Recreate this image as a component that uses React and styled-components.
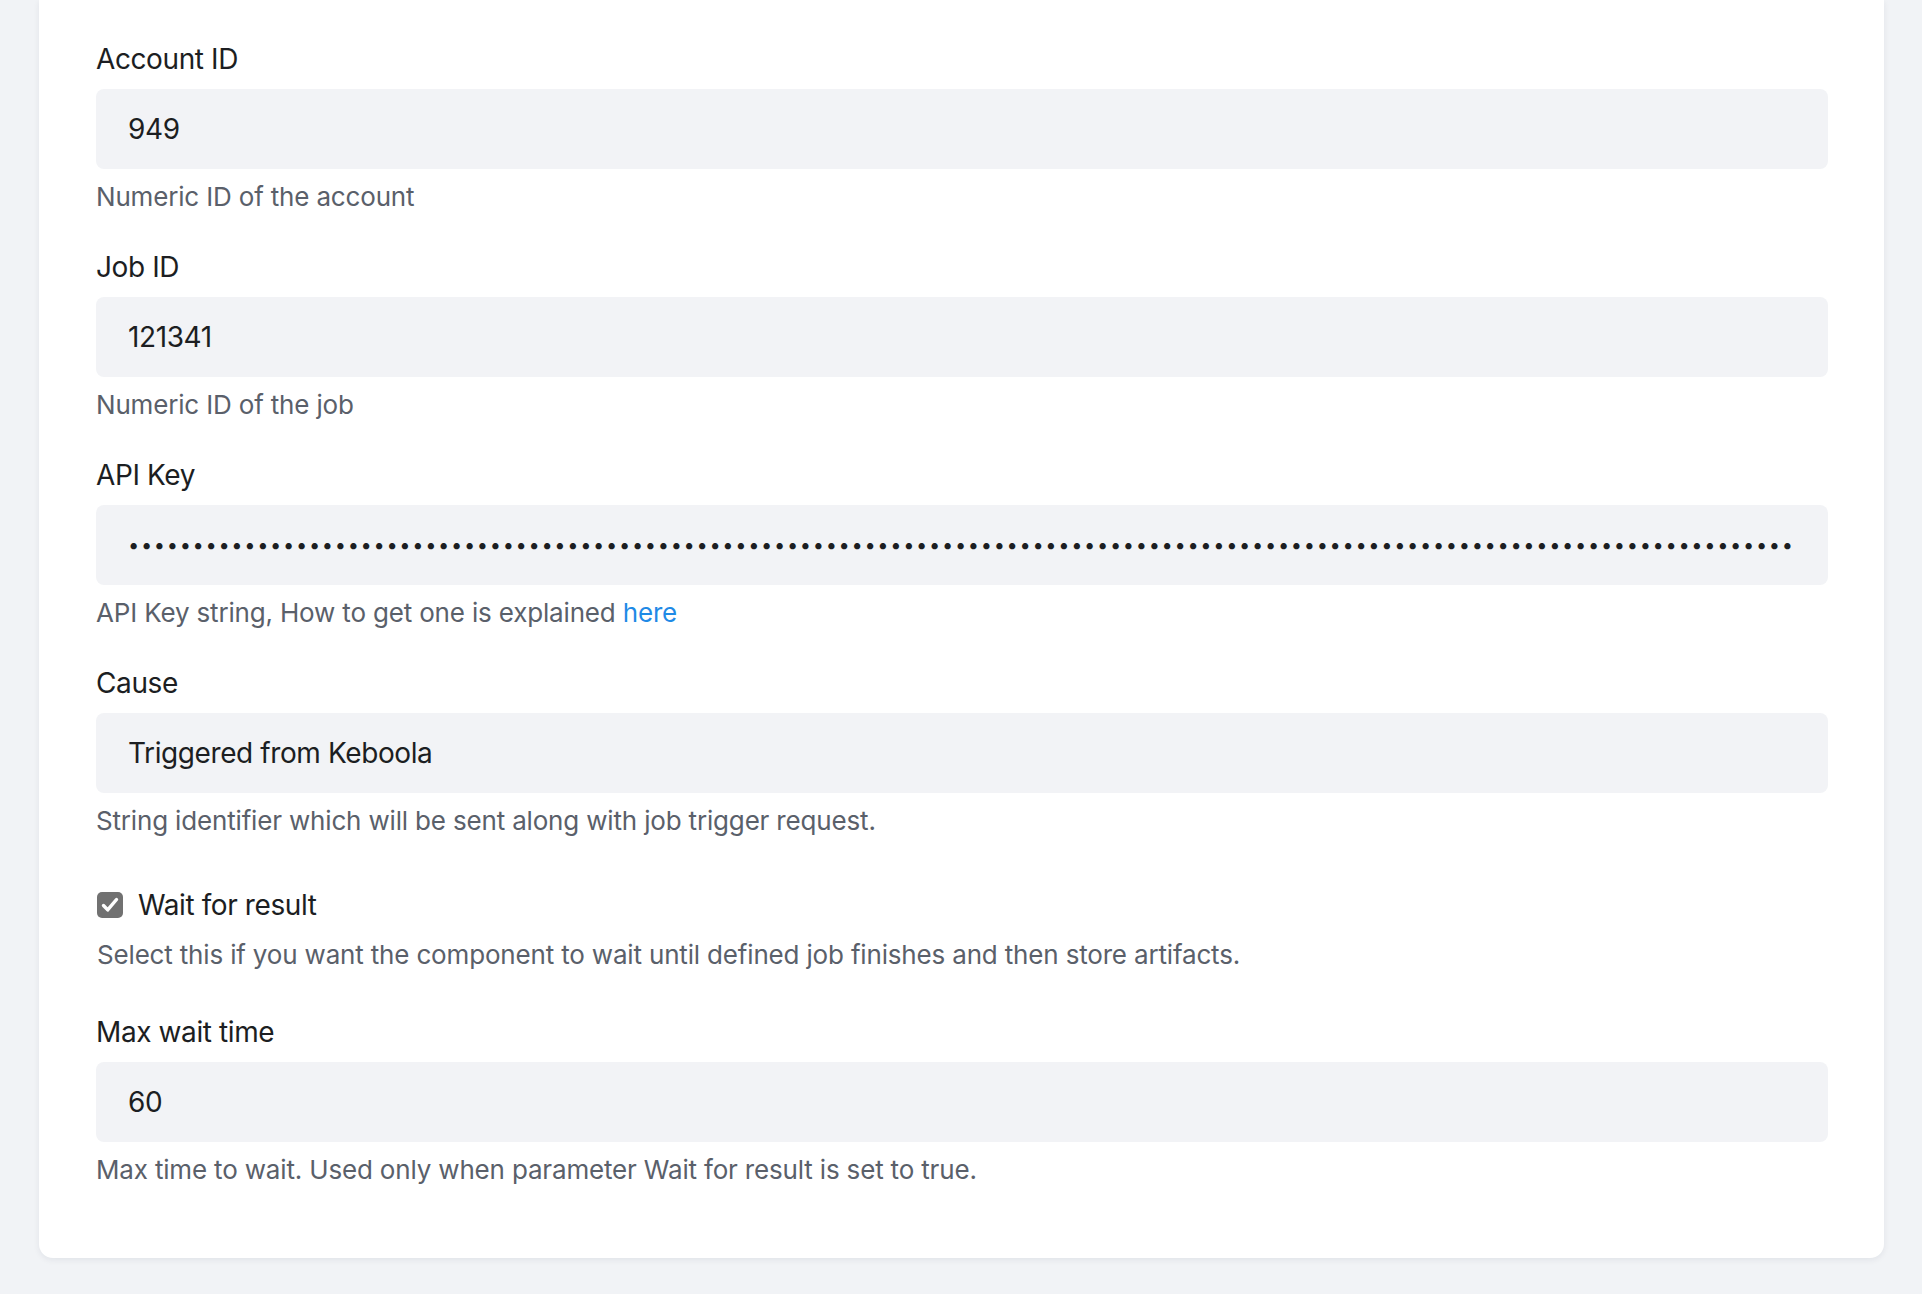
import styled, { createGlobalStyle } from "styled-components";

const GlobalStyle = createGlobalStyle`
  html, body {
    margin: 0;
    padding: 0;
    background: #f1f3f6;
  }
  body {
    font-family: Inter, "Noto Sans", "Liberation Sans", sans-serif;
    -webkit-font-smoothing: antialiased;
  }
`;

const API_KEY = "x".repeat(129);

export default function App() {
  return (
    <>
      <GlobalStyle />
      <Page>
        <Card>
          <Field>
            <Label htmlFor="account-id">Account ID</Label>
            <Input id="account-id" type="text" defaultValue="949" />
            <Help>Numeric ID of the account</Help>
          </Field>

          <Field>
            <Label htmlFor="job-id">Job ID</Label>
            <Input id="job-id" type="text" defaultValue="121341" />
            <Help>Numeric ID of the job</Help>
          </Field>

          <Field>
            <Label htmlFor="api-key">API Key</Label>
            <Input id="api-key" type="password" defaultValue={API_KEY} secret />
            <Help>
              API Key string, How to get one is explained <Link href="#">here</Link>
            </Help>
          </Field>

          <Field>
            <Label htmlFor="cause">Cause</Label>
            <Input id="cause" type="text" defaultValue="Triggered from Keboola" />
            <Help>String identifier which will be sent along with job trigger request.</Help>
          </Field>

          <CheckField>
            <CheckRow>
              <CheckBox>
                <svg width="22" height="22" viewBox="0 0 22 22" fill="none">
                  <path
                    d="M4.5 11.5l4.2 4.4L17.5 5.5"
                    stroke="#fff"
                    strokeWidth="3.4"
                    strokeLinecap="round"
                    strokeLinejoin="round"
                  />
                </svg>
              </CheckBox>
              Wait for result
            </CheckRow>
            <Help tight>
              Select this if you want the component to wait until defined job finishes and then
              store artifacts.
            </Help>
          </CheckField>

          <Field last>
            <Label htmlFor="max-wait">Max wait time</Label>
            <Input id="max-wait" type="text" defaultValue="60" />
            <Help>Max time to wait. Used only when parameter Wait for result is set to true.</Help>
          </Field>
        </Card>
      </Page>
    </>
  );
}

const Page = styled.div`
  padding: 0 38px 36px 39px;
`;

const Card = styled.div`
  background: #ffffff;
  border-radius: 0 0 14px 14px;
  box-shadow: 0 2px 6px rgba(20, 30, 50, 0.07);
  padding: 39px 56px 68px 57px;
`;

const Field = styled.div`
  display: flex;
  flex-direction: column;
  margin-bottom: ${(props) => (props.last ? "0" : "30px")};
`;

const Label = styled.label`
  font-size: 28px;
  line-height: 40px;
  letter-spacing: -0.4px;
  color: #1c1e22;
  margin-bottom: 10px;
`;

const Input = styled.input`
  box-sizing: border-box;
  width: 100%;
  height: 80px;
  border: none;
  outline: none;
  border-radius: 8px;
  background: #f2f3f6;
  padding: 0 32px;
  font-family: inherit;
  font-size: ${(props) => (props.secret ? "20px" : "28px")};
  letter-spacing: ${(props) => (props.secret ? "1.67px" : "-0.4px")};
  color: #1c1e22;
`;

const Help = styled.div`
  margin-top: ${(props) => (props.tight ? "10px" : "8px")};
  font-size: 26px;
  line-height: 40px;
  letter-spacing: -0.17px;
  color: #5a606a;
  padding-left: ${(props) => (props.tight ? "1px" : "0")};
`;

const Link = styled.a`
  color: #1f8ae6;
  text-decoration: none;
`;

const CheckField = styled.div`
  margin-top: 44px;
  margin-bottom: 37px;
`;

const CheckRow = styled.label`
  display: flex;
  align-items: center;
  gap: 15px;
  padding-left: 1px;
  font-size: 28px;
  line-height: 40px;
  letter-spacing: -0.4px;
  color: #1c1e22;
`;

const CheckBox = styled.span`
  display: inline-flex;
  align-items: center;
  justify-content: center;
  width: 26px;
  height: 26px;
  border-radius: 5px;
  background: #717171;
`;
